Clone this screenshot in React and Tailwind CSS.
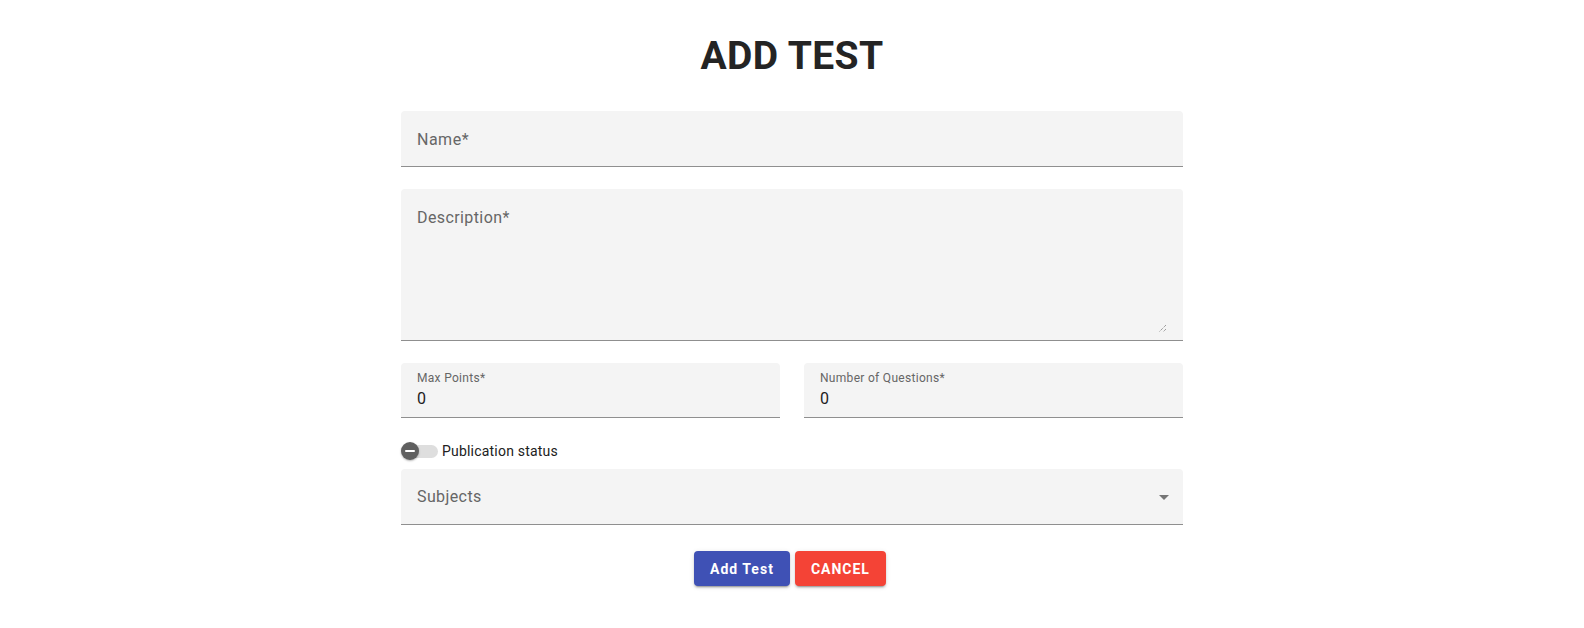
export default function App() {
  const btnShadow =
    "shadow-[0_3px_1px_-2px_rgba(0,0,0,0.2),0_2px_2px_0_rgba(0,0,0,0.14),0_1px_5px_0_rgba(0,0,0,0.12)]";
  return (
    <div className="min-h-screen bg-white font-['Roboto',sans-serif]">
      <div className="mx-auto w-[782px] pt-[33px]">
        <h1 className="text-center text-[39px] font-bold leading-[46px] tracking-[0.4px] text-[#242424]">
          ADD TEST
        </h1>

        <div className="mt-[32px] flex flex-col">
          {/* Name */}
          <div className="flex h-[56px] items-center rounded-t-[4px] border-b border-[#8f8f8f] bg-[#f4f4f4] px-4 pt-[2px] text-base tracking-[0.5px] text-[#666666]">
            Name*
          </div>

          {/* Description */}
          <div className="relative mt-[22px] h-[152px] rounded-t-[4px] border-b border-[#8f8f8f] bg-[#f4f4f4] px-4 pt-[17px] text-base leading-[24px] tracking-[0.4px] text-[#666666]">
            Description*
            <svg
              className="absolute bottom-[7px] right-[16px]"
              width="9"
              height="9"
              viewBox="0 0 9 9"
            >
              <path d="M8 1 L1 8" stroke="#777" strokeWidth="1" strokeDasharray="1 1" />
              <path d="M8 5 L5 8" stroke="#777" strokeWidth="1" strokeDasharray="1 1" />
            </svg>
          </div>

          {/* Max Points / Number of Questions */}
          <div className="mt-[22px] grid grid-cols-2 gap-[24px]">
            <div className="h-[55px] rounded-t-[4px] border-b border-[#8f8f8f] bg-[#f4f4f4] px-4 pt-[7px]">
              <div className="text-[12px] leading-[16px] tracking-[0.3px] text-[#666666]">Max Points*</div>
              <div className="mt-[3px] text-base leading-[20px] text-[#212121]">0</div>
            </div>
            <div className="h-[55px] rounded-t-[4px] border-b border-[#8f8f8f] bg-[#f4f4f4] px-4 pt-[7px]">
              <div className="text-[12px] leading-[16px] tracking-[0.3px] text-[#666666]">Number of Questions*</div>
              <div className="mt-[3px] text-base leading-[20px] text-[#212121]">0</div>
            </div>
          </div>

          {/* Publication status switch */}
          <div className="mt-[21px] flex h-[24px] items-center">
            <div className="relative h-[20px] w-[37px]">
              <div className="absolute left-[3px] top-[4px] h-[13px] w-[34px] rounded-full bg-[#dedede]" />
              <div className="absolute left-0 top-[1px] flex h-[18px] w-[18px] items-center justify-center rounded-full bg-[#5f5f5f] shadow-[0_1px_2px_rgba(0,0,0,0.3)]">
                <div className="h-[2px] w-[10px] rounded-full bg-white" />
              </div>
            </div>
            <span className="ml-[4px] text-sm tracking-[0.2px] text-[#212121]">Publication status</span>
          </div>

          {/* Subjects */}
          <div className="mt-[6px] flex h-[56px] items-center justify-between rounded-t-[4px] border-b border-[#8f8f8f] bg-[#f4f4f4] pl-4 pr-[7px] text-base tracking-[0.4px] text-[#666666]">
            <span>Subjects</span>
            <svg width="24" height="24" viewBox="0 0 24 24">
              <path d="M7 10l5 5 5-5z" fill="#757575" />
            </svg>
          </div>

          {/* Buttons */}
          <div className="mt-[26px] flex justify-center gap-[5px] pr-[4px]">
            <button
              className={`h-[35px] rounded-[4px] bg-[#3f51b5] px-4 text-sm font-bold tracking-[1px] text-white ${btnShadow}`}
            >
              Add Test
            </button>
            <button
              className={`h-[35px] rounded-[4px] bg-[#f44336] px-4 text-sm font-bold tracking-[1px] text-white ${btnShadow}`}
            >
              CANCEL
            </button>
          </div>
        </div>
      </div>
    </div>
  );
}
